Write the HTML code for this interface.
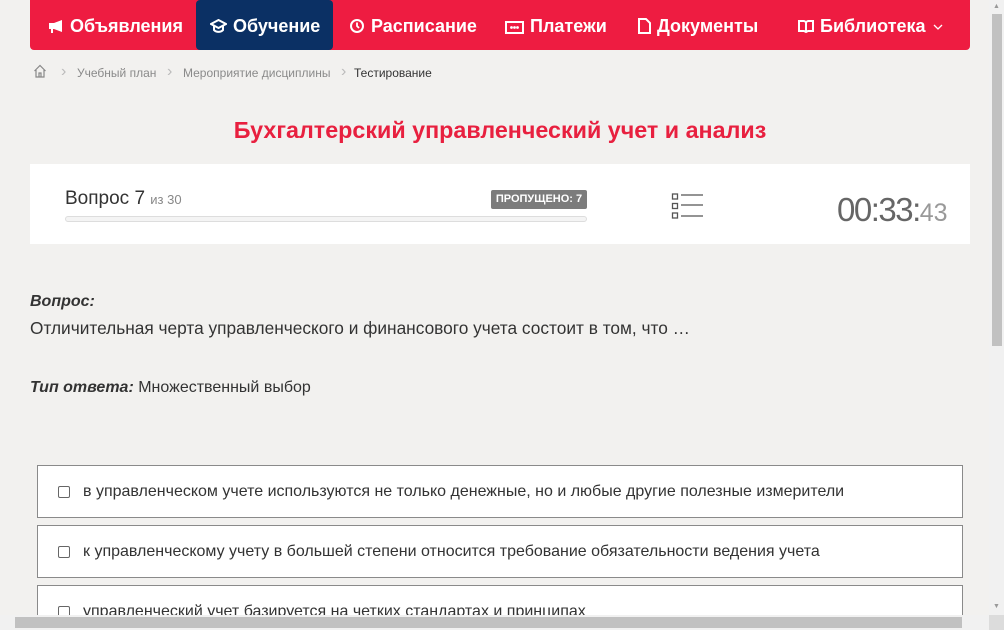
<!DOCTYPE html>
<html><head><meta charset="utf-8"><style>
*{box-sizing:border-box;margin:0;padding:0}
html,body{width:1004px;height:630px;overflow:hidden;background:#f2f1ef;font-family:"Liberation Sans",sans-serif;position:relative}
.nav{position:absolute;left:30px;top:0;width:940px;height:50px;background:#ee1c41;border-radius:0 0 4px 4px}
.nav .it{position:absolute;top:0;height:50px;line-height:52px;color:#fff;font-size:18px;font-weight:bold;white-space:nowrap}
.nav .act{background:#0b3064;border-radius:4px}
.nav svg{vertical-align:-2px;margin-right:6px}
.bc{position:absolute;top:66px;font-size:12px;color:#8a8a8a}
.sep{position:absolute;top:63px;color:#bbb;font-size:16px}
h1{position:absolute;top:117px;left:0;width:1000px;text-align:center;color:#e8203f;font-size:23.3px;font-weight:bold}
.card{position:absolute;left:30px;top:164px;width:940px;height:80px;background:#fff}
.nar{font-family:"Liberation Sans Narrow","Liberation Sans",sans-serif}
.opt{position:absolute;left:37px;width:926px;height:53px;border:1px solid #8a8a8a;background:#fff}
.opt span{position:absolute;left:45px;top:17px;font-size:16px;color:#333;font-family:"Liberation Sans Narrow","Liberation Sans",sans-serif}
.opt i{position:absolute;left:20px;top:20px;width:12px;height:12px;border:1px solid #666;border-radius:2px;background:#fff}
</style></head><body>
<div class="nav">
 <div class="it" style="left:18px"><svg width="16" height="15" viewBox="0 0 16 15"><path d="M1 4h5l8-3v12l-8-3H5v4H3v-4H1z" fill="#fff"/></svg>Объявления</div>
 <div class="it act" style="left:166px;width:137px;padding-left:14px"><svg width="17" height="15" viewBox="0 0 17 15"><path d="M8.5 1L1 5l7.5 4 7.5-4z M4 7v4c2.5 2.5 6.5 2.5 9 0V7" fill="none" stroke="#fff" stroke-width="2"/></svg>Обучение</div>
 <div class="it" style="left:319px"><svg width="16" height="16" viewBox="0 0 16 16"><circle cx="8" cy="8" r="6" fill="none" stroke="#fff" stroke-width="2"/><path d="M8 4.5v3.5l2 2" stroke="#fff" stroke-width="1.8" fill="none"/></svg>Расписание</div>
 <div class="it" style="left:475px"><svg width="19" height="13" viewBox="0 0 19 13"><rect x="1" y="1" width="17" height="11" fill="none" stroke="#fff" stroke-width="2"/><circle cx="6.5" cy="6.5" r="1.4" fill="#fff"/><circle cx="9.5" cy="6.5" r="1.4" fill="#fff"/><circle cx="12.5" cy="6.5" r="1.4" fill="#fff"/></svg>Платежи</div>
 <div class="it" style="left:608px"><svg width="13" height="16" viewBox="0 0 13 16"><path d="M1 1h7l4 4v10H1z" fill="none" stroke="#fff" stroke-width="2"/></svg>Документы</div>
 <div class="it" style="left:768px"><svg width="16" height="15" viewBox="0 0 16 15"><path d="M1 2h5l2 1 2-1h5v10h-5l-2 1-2-1H1z M8 3v10" fill="none" stroke="#fff" stroke-width="2"/></svg>Библиотека <svg width="10" height="7" viewBox="0 0 10 7" style="vertical-align:1px;margin-left:2px"><path d="M1 1l4 4 4-4" fill="none" stroke="#fff" stroke-width="1.3"/></svg></div>
</div>
<svg style="position:absolute;left:33px;top:64px" width="14" height="14" viewBox="0 0 14 14"><path d="M1.5 7L7 1.5 12.5 7M3 6v7h8V6M6 13V9h2v4" fill="none" stroke="#888" stroke-width="1.2"/></svg>
<span class="sep" style="left:61px">&#8250;</span><span class="bc" style="left:77px">Учебный план</span>
<span class="sep" style="left:167px">&#8250;</span><span class="bc" style="left:183px">Мероприятие дисциплины</span>
<span class="sep" style="left:341px">&#8250;</span><span class="bc" style="left:354px;color:#333">Тестирование</span>
<h1>Бухгалтерский управленческий учет и анализ</h1>
<div class="card">
 <div class="nar" style="position:absolute;left:35px;top:24px;font-size:19px;color:#333">Вопрос 7 <span style="font-size:13px;color:#888">из 30</span></div>
 <div class="nar" style="position:absolute;left:461px;top:26px;width:96px;height:19px;background:#7c7c7c;border-radius:2px;color:#fff;font-size:11px;font-weight:bold;text-align:center;line-height:19px">ПРОПУЩЕНО: 7</div>
 <div style="position:absolute;left:35px;top:52px;width:522px;height:6px;border:1px solid #ddd;border-radius:3px;background:#f4f4f4"></div>
 <svg style="position:absolute;left:641px;top:28px" width="33" height="28" viewBox="0 0 33 28"><g fill="none" stroke="#555" stroke-width="1.3"><rect x="1.5" y="2" width="5" height="5"/><rect x="1.5" y="11.5" width="5" height="5"/><rect x="1.5" y="21" width="5" height="5"/><path d="M10 3h22M10 13h22M10 24h22"/></g></svg>
 <div style="position:absolute;left:807px;top:27px;font-size:33px;color:#666;letter-spacing:-1.5px">00:33:<span style="font-size:25px;color:#999;letter-spacing:0">43</span></div>
</div>
<div style="position:absolute;left:30px;top:293px;font-size:16px;font-weight:bold;font-style:italic;color:#333">Вопрос:</div>
<div style="position:absolute;left:30px;top:318px;font-size:17.3px;color:#333">Отличительная черта управленческого и финансового учета состоит в том, что …</div>
<div style="position:absolute;left:30px;top:379px;font-size:16px;color:#333"><b><i>Тип ответа:</i></b> Множественный выбор</div>
<div class="opt" style="top:465px"><i></i><span>в управленческом учете используются не только денежные, но и любые другие полезные измерители</span></div>
<div class="opt" style="top:525px"><i></i><span>к управленческому учету в большей степени относится требование обязательности ведения учета</span></div>
<div class="opt" style="top:585px"><i></i><span>управленческий учет базируется на четких стандартах и принципах</span></div>
<div style="position:absolute;left:989px;top:0;width:15px;height:630px;background:#f1f1f1"></div>
<div style="position:absolute;left:992px;top:14px;width:10px;height:332px;background:#c1c1c1"></div>
<div style="position:absolute;left:993px;top:3px;font-size:7px;color:#999">&#9650;</div>
<div style="position:absolute;left:993px;top:603px;font-size:7px;color:#999">&#9660;</div>
<div style="position:absolute;left:0;top:615px;width:989px;height:15px;background:#f1f1f1"></div>
<div style="position:absolute;left:15px;top:617px;width:947px;height:11px;background:#c1c1c1"></div>
<div style="position:absolute;left:989px;top:615px;width:15px;height:15px;background:#dcdcdc"></div>
</body></html>
